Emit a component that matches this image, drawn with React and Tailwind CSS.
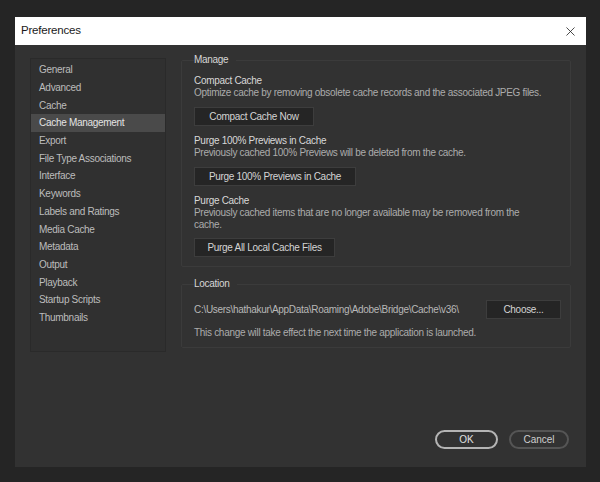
import { X } from "lucide-react"

const categories = [
    "General",
    "Advanced",
    "Cache",
    "Cache Management",
    "Export",
    "File Type Associations",
    "Interface",
    "Keywords",
    "Labels and Ratings",
    "Media Cache",
    "Metadata",
    "Output",
    "Playback",
    "Startup Scripts",
    "Thumbnails"
]

function Button({ children, className = "" }) {
    return (
        <button className={`block h-[19px] border border-[#3d3d3d] bg-[#252525] text-[#d4d4d4] text-[10px] tracking-[-0.3px] leading-none ${className}`}>
            {children}
        </button>
    )
}

function Group({ label, children, className = "" }) {
    return (
        <fieldset className={`border border-[#3b3b3b] rounded-[2px] pl-3 pr-[9px] ${className}`}>
            <legend className="text-[#d6d6d6] text-[10px] tracking-[-0.3px] leading-none pr-2">{label}</legend>
            {children}
        </fieldset>
    )
}

export default function App() {
    const selected = "Cache Management"

    return (
        <div className="w-[600px] h-[482px] bg-[#252525] pt-[17px] pl-[15px] font-['Liberation_Sans',sans-serif]">
            <div className="w-[571px] h-[450px] bg-[#323232] flex flex-col">
                <div className="h-[28px] bg-white flex items-center justify-between pl-[6px] pr-[8px]">
                    <span className="text-[11.5px] tracking-[-0.2px] text-[#1a1a1a]">Preferences</span>
                    <X size={15} strokeWidth={1.3} className="text-[#222]" />
                </div>

                <div className="flex flex-1 pl-[15px] pr-[15px] pt-[13px]">
                    <div className="w-[136px] h-[294px] shrink-0 border border-[#2a2a2a] bg-[#303030] pt-[2px]">
                        {categories.map((c) => (
                            <div
                                key={c}
                                className={`h-[17.7px] flex items-center pl-[8px] text-[10px] tracking-[-0.3px] ${c === selected ? "bg-[#4a4a4a] text-[#e4e4e4]" : "text-[#bdbdbd]"}`}
                            >
                                {c}
                            </div>
                        ))}
                    </div>

                    <div className="flex-1 ml-[15px] flex flex-col gap-[12px] -mt-[3px]">
                        <Group label="Manage" className="h-[212px] pt-[10px]">
                            <div className="text-[10px] tracking-[-0.3px] leading-[12px]">
                                <div className="text-[#d8d8d8]">Compact Cache</div>
                                <div className="text-[#acacac]">Optimize cache by removing obsolete cache records and the associated JPEG files.</div>
                                <Button className="w-[120px] mt-[8px]">Compact Cache Now</Button>

                                <div className="text-[#d8d8d8] mt-[9px]">Purge 100% Previews in Cache</div>
                                <div className="text-[#acacac]">Previously cached 100% Previews will be deleted from the cache.</div>
                                <Button className="w-[162px] mt-[8px]">Purge 100% Previews in Cache</Button>

                                <div className="text-[#d8d8d8] mt-[9px]">Purge Cache</div>
                                <div className="text-[#acacac] w-[332px]">Previously cached items that are no longer available may be removed from the cache.</div>
                                <Button className="w-[141px] mt-[7px]">Purge All Local Cache Files</Button>
                            </div>
                        </Group>

                        <Group label="Location" className="h-[69px] pt-[11px]">
                            <div className="flex items-center justify-between text-[10px] tracking-[-0.3px]">
                                <span className="text-[#b8b8b8]">C:\Users\hathakur\AppData\Roaming\Adobe\Bridge\Cache\v36\</span>
                                <Button className="w-[75px]">Choose...</Button>
                            </div>
                            <div className="text-[#acacac] text-[10px] tracking-[-0.3px] mt-[6px]">This change will take effect the next time the application is launched.</div>
                        </Group>

                        <div className="flex-1 flex items-end justify-end gap-[11px] pb-[18px] pr-[2px]">
                            <button className="w-[63px] h-[19px] rounded-full border-2 border-[#b4b4b4] text-[#e0e0e0] text-[10px]">OK</button>
                            <button className="w-[60px] h-[19px] rounded-full border-2 border-[#555] text-[#cfcfcf] text-[10px]">Cancel</button>
                        </div>
                    </div>
                </div>
            </div>
        </div>
    )
}
